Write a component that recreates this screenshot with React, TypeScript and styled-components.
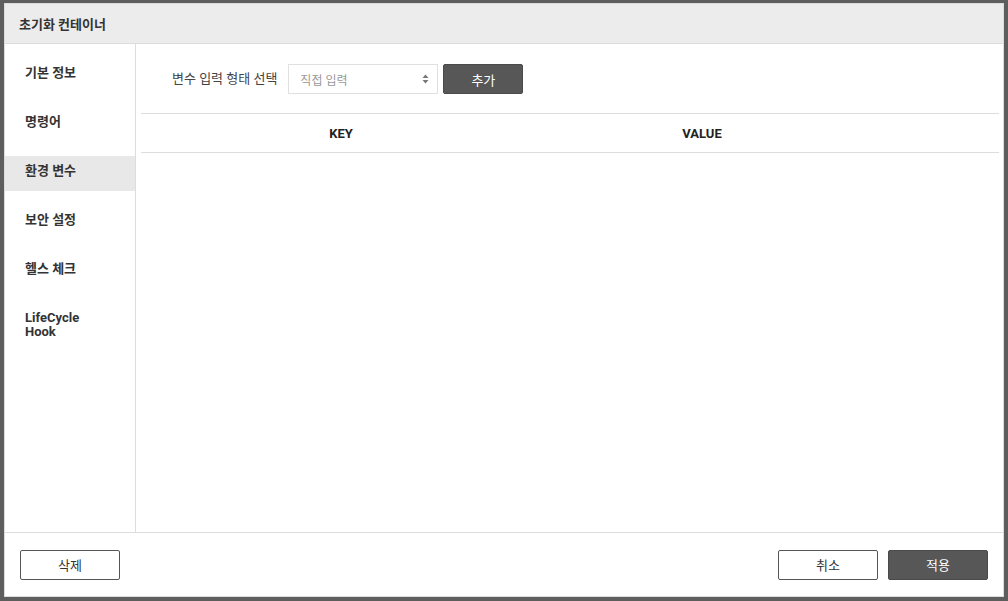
import styled, { createGlobalStyle } from "styled-components"

const GlobalStyle = createGlobalStyle`
  html, body {
    margin: 0;
    padding: 0;
    background: #5e5e5e;
    font-family: Roboto, "Noto Sans CJK KR", sans-serif;
  }
  * { box-sizing: border-box; }
`

const Overlay = styled.div`
  width: 1008px;
  height: 601px;
  padding: 3px 0 0 4px;
  background: #5e5e5e;
`

const Modal = styled.div`
  width: 1000px;
  height: 594px;
  border: 1px solid #dcdcdc;
  background: #fff;
  display: flex;
  flex-direction: column;
`

const Header = styled.div`
  height: 40px;
  flex: none;
  display: flex;
  align-items: center;
  padding: 0 14px;
  background: #ececec;
  border-bottom: 1px solid #dddddd;
  font-size: 13px;
  font-weight: 700;
  color: #333;
`

const Body = styled.div`
  flex: 1;
  display: flex;
  min-height: 0;
`

const Sidebar = styled.div`
  width: 131px;
  flex: none;
  border-right: 1px solid #dddddd;
  padding-top: 14px;
  display: flex;
  flex-direction: column;
  gap: 14px;
`

const NavItem = styled.div<{ $active?: boolean }>`
  min-height: 35px;
  padding: 8px 20px 13px;
  font-size: 13px;
  font-weight: 700;
  line-height: 14px;
  color: #333;
  background: ${(p) => (p.$active ? "#e8e8e8" : "transparent")};
`

const Content = styled.div`
  flex: 1;
  padding: 20px 4px 0 5px;
`

const FormRow = styled.div`
  display: flex;
  align-items: center;
  height: 30px;
  padding-left: 31px;
  margin-bottom: 19px;
`

const Label = styled.span`
  font-size: 13px;
  color: #444;
  margin-right: 11px;
  margin-top: -3px;
`

const Select = styled.div`
  width: 150px;
  height: 30px;
  border: 1px solid #e0e0e0;
  display: flex;
  align-items: center;
  justify-content: space-between;
  padding: 0 8px 0 11px;
  font-size: 12px;
  color: #999;
`

const DarkButton = styled.button<{ $w: number }>`
  width: ${(p) => p.$w}px;
  height: 30px;
  border: 1px solid #4a4a4a;
  border-radius: 2px;
  background: #575757;
  color: #fff;
  font-family: inherit;
  font-size: 13px;
  padding: 0;
`

const LightButton = styled.button`
  width: 100px;
  height: 30px;
  border: 1px solid #555;
  border-radius: 2px;
  background: #fff;
  color: #333;
  font-family: inherit;
  font-size: 13px;
  padding: 0;
`

const Table = styled.div`
  display: grid;
  grid-template-columns: 400px 322px 1fr;
  height: 40px;
  border-top: 1px solid #dddddd;
  border-bottom: 1px solid #dddddd;
`

const Th = styled.div`
  display: flex;
  align-items: center;
  justify-content: center;
  font-size: 13px;
  font-weight: 700;
  color: #222;
`

const Footer = styled.div`
  height: 64px;
  flex: none;
  border-top: 1px solid #dddddd;
  display: flex;
  align-items: center;
  justify-content: space-between;
  padding: 0 15px 0 15px;
`

const Group = styled.div`
  display: flex;
  gap: 10px;
`

const SelectArrows = () => (
  <svg width="7" height="10" viewBox="0 0 7 10">
    <path d="M3.5 0.5 L6.5 4 L0.5 4 Z" fill="#777" />
    <path d="M3.5 9.5 L6.5 6 L0.5 6 Z" fill="#777" />
  </svg>
)

const navItems = ["기본 정보", "명령어", "환경 변수", "보안 설정", "헬스 체크"]

const App = () => {
  return (
    <Overlay>
      <GlobalStyle />
      <Modal>
        <Header>초기화 컨테이너</Header>
        <Body>
          <Sidebar>
            {navItems.map((item) => (
              <NavItem key={item} $active={item === "환경 변수"}>
                {item}
              </NavItem>
            ))}
            <NavItem>
              LifeCycle
              <br />
              Hook
            </NavItem>
          </Sidebar>
          <Content>
            <FormRow>
              <Label>변수 입력 형태 선택</Label>
              <Select>
                <span>직접 입력</span>
                <SelectArrows />
              </Select>
              <DarkButton $w={80} style={{ marginLeft: 5 }}>추가</DarkButton>
            </FormRow>
            <Table>
              <Th>KEY</Th>
              <Th>VALUE</Th>
              <Th />
            </Table>
          </Content>
        </Body>
        <Footer>
          <LightButton>삭제</LightButton>
          <Group>
            <LightButton>취소</LightButton>
            <DarkButton $w={100}>적용</DarkButton>
          </Group>
        </Footer>
      </Modal>
    </Overlay>
  )
}

export default App
